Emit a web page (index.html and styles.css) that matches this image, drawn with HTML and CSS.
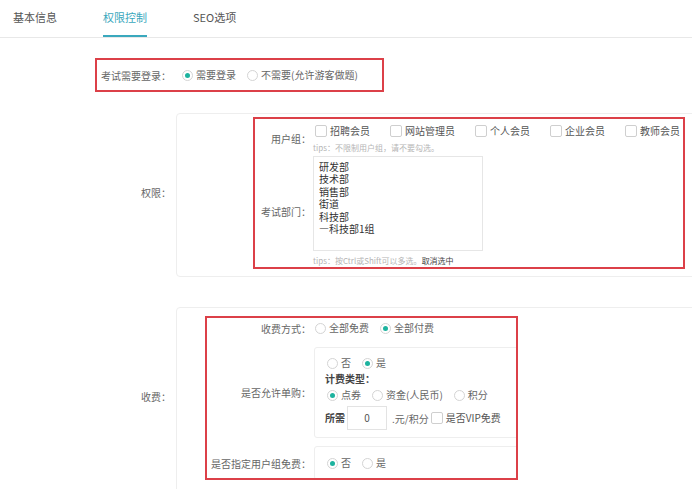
FILE: index.html
```html
<!DOCTYPE html>
<html lang="zh-CN">
<head>
  <meta charset="UTF-8" />
  <meta name="viewport" content="width=device-width, initial-scale=1.0"/>
  <title>权限控制</title>
  <link rel="stylesheet" href="styles.css">
</head>
<body>
  <div class="tabs">
    <span class="tab">基本信息</span>
    <span class="tab active">权限控制</span>
    <span class="tab">SEO选项</span>
  </div>

  <div class="form">
    <div class="login-line">
      <div class="mark login-row">
        <span class="login-label">考试需要登录：</span>
        <span class="opt"><i class="radio on"></i>需要登录</span>
        <span class="opt"><i class="radio"></i>不需要(允许游客做题)</span>
      </div>
    </div>

    <div class="section section-auth">
      <div class="section-label">权限：</div>
      <div class="panel panel-auth">
        <div class="mark auth-box">
          <div class="field">
            <div class="field-label">用户组：</div>
            <div class="field-body">
              <div class="opts">
                <span class="opt check-opt"><i class="check"></i>招聘会员</span>
                <span class="opt check-opt"><i class="check"></i>网站管理员</span>
                <span class="opt check-opt"><i class="check"></i>个人会员</span>
                <span class="opt check-opt"><i class="check"></i>企业会员</span>
                <span class="opt check-opt"><i class="check"></i>教师会员</span>
              </div>
              <div class="tips">tips：不限制用户组，请不要勾选。</div>
            </div>
          </div>
          <div class="field field-dept">
            <div class="field-label">考试部门：</div>
            <div class="field-body">
              <div class="multi">
                <div>研发部</div>
                <div>技术部</div>
                <div>销售部</div>
                <div>街道</div>
                <div>科技部</div>
                <div>—科技部1组</div>
              </div>
              <div class="tips tips-dept">tips：按Ctrl或Shift可以多选。<span class="tips-link">取消选中</span></div>
            </div>
          </div>
        </div>
      </div>
    </div>

    <div class="section section-fee">
      <div class="section-label">收费：</div>
      <div class="panel panel-fee">
        <div class="mark fee-box">
          <div class="field">
            <div class="field-label wide">收费方式：</div>
            <div class="field-body">
              <div class="opts">
                <span class="opt"><i class="radio"></i>全部免费</span>
                <span class="opt"><i class="radio on"></i>全部付费</span>
              </div>
            </div>
          </div>
          <div class="field field-buy">
            <div class="field-label wide">是否允许单购：</div>
            <div class="field-body">
              <div class="subbox">
                <div class="opts">
                  <span class="opt"><i class="radio"></i>否</span>
                  <span class="opt"><i class="radio on"></i>是</span>
                </div>
                <div class="sub-title">计费类型：</div>
                <div class="opts">
                  <span class="opt"><i class="radio on"></i>点券</span>
                  <span class="opt"><i class="radio"></i>资金(人民币)</span>
                  <span class="opt"><i class="radio"></i>积分</span>
                </div>
                <div class="price-row">
                  <span class="sub-title">所需</span>
                  <span class="price-input">0</span>
                  <span class="unit">.元/积分</span>
                  <span class="opt vip"><i class="check"></i>是否VIP免费</span>
                </div>
              </div>
            </div>
          </div>
          <div class="field field-free">
            <div class="field-label wide">是否指定用户组免费：</div>
            <div class="field-body">
              <div class="subbox subbox-free">
                <div class="opts">
                  <span class="opt"><i class="radio on"></i>否</span>
                  <span class="opt"><i class="radio"></i>是</span>
                </div>
              </div>
            </div>
          </div>
        </div>
      </div>
    </div>
  </div>
</body>
</html>
```

FILE: styles.css
```css
html, body {
  overflow: hidden;
}

body {
  margin: 0;
  font-family: "Noto Sans CJK SC", "Noto Sans", sans-serif;
  font-size: 10px;
  color: #666;
  background: #fff;
}

.tabs {
  display: flex;
  gap: 46px;
  height: 37px;
  padding-left: 13px;
  border-bottom: 1px solid #e8e8e8;
}

.tab {
  font-size: 11px;
  line-height: 35px;
  color: #555;
  border-bottom: 2px solid transparent;
}

.tab.active {
  color: #3aa8bd;
  border-bottom-color: #3aa8bd;
}

.form {
  padding-top: 20px;
}

.mark {
  border: 2px solid #dc4048;
  box-sizing: border-box;
}

.login-row {
  display: inline-flex;
  align-items: center;
  height: 34px;
  margin-left: 95px;
  padding: 0 13px 0 4px;
}

.login-label {
  margin-right: 11px;
}

/* radios and checkboxes */
.opts {
  display: flex;
  align-items: center;
  height: 16px;
  padding-left: 2px;
}

.opt {
  display: inline-flex;
  align-items: center;
  margin-right: 11px;
  line-height: 16px;
  white-space: nowrap;
}

.check-opt {
  margin-right: 20px;
  color: #555;
}

.radio {
  width: 11px;
  height: 11px;
  border: 1px solid #d4d4d4;
  border-radius: 50%;
  box-sizing: border-box;
  display: inline-flex;
  align-items: center;
  justify-content: center;
  margin-right: 3px;
  flex-shrink: 0;
}

.radio.on::after {
  content: "";
  width: 5px;
  height: 5px;
  border-radius: 50%;
  background: #1db39f;
}

.check {
  width: 12px;
  height: 12px;
  border: 1px solid #cfcfcf;
  border-radius: 2px;
  box-sizing: border-box;
  margin-right: 3px;
  flex-shrink: 0;
}

/* sections */
.section {
  display: flex;
  align-items: center;
}

.section-auth {
  margin-top: 21px;
}

.section-fee {
  margin-top: 30px;
}

.section-label {
  width: 171px;
  flex-shrink: 0;
  text-align: right;
}

.section-auth .section-label {
  padding-bottom: 6px;
}

.section-fee .section-label {
  padding-bottom: 8px;
}

.panel {
  margin-left: 5px;
  width: 640px;
  flex-shrink: 0;
  border: 1px solid #eee;
  border-radius: 4px;
}

.panel-auth {
  padding: 3px 0 7px 76px;
}

.panel-fee {
  padding: 8px 0 12px 28px;
}

.auth-box {
  width: 432px;
  padding-top: 4px;
}

.field {
  display: flex;
  align-items: center;
}

.field-label {
  width: 56px;
  flex-shrink: 0;
  text-align: right;
}

.field-label.wide {
  width: 104px;
}

.field-body {
  margin-left: 2px;
}

.tips {
  font-size: 8px;
  line-height: 12px;
  margin-top: 3px;
  color: #b5b5b5;
}

.tips-dept {
  margin-top: 4px;
}

.tips-link {
  color: #444;
}

.field-dept {
  margin-top: 2px;
}

.multi {
  width: 170px;
  height: 95px;
  box-sizing: border-box;
  border: 1px solid #e6e6e6;
  padding: 4px 5px;
  line-height: 12.4px;
  color: #333;
}

/* fee */
.fee-box {
  width: 313px;
  height: 164px;
  padding-top: 2px;
  overflow: hidden;
}

.field-buy {
  margin-top: 11px;
}

.field-free {
  margin-top: 8px;
}

.subbox {
  width: 260px;
  margin-left: 1px;
  border: 1px solid #eee;
  border-radius: 3px;
  padding: 7px 0 7px 10px;
}

.subbox-free {
  padding: 8px 0 8px 10px;
}

.sub-title {
  font-weight: bold;
  color: #444;
  line-height: 16px;
}

.price-row {
  display: flex;
  align-items: center;
  margin-top: 3px;
  height: 24px;
}

.price-input {
  width: 40px;
  height: 24px;
  box-sizing: border-box;
  margin-left: 2px;
  border: 1px solid #e3e3e3;
  text-align: center;
  line-height: 22px;
  color: #555;
}

.unit {
  margin-left: 5px;
}

.vip {
  margin-left: 2px;
  color: #555;
}
```
